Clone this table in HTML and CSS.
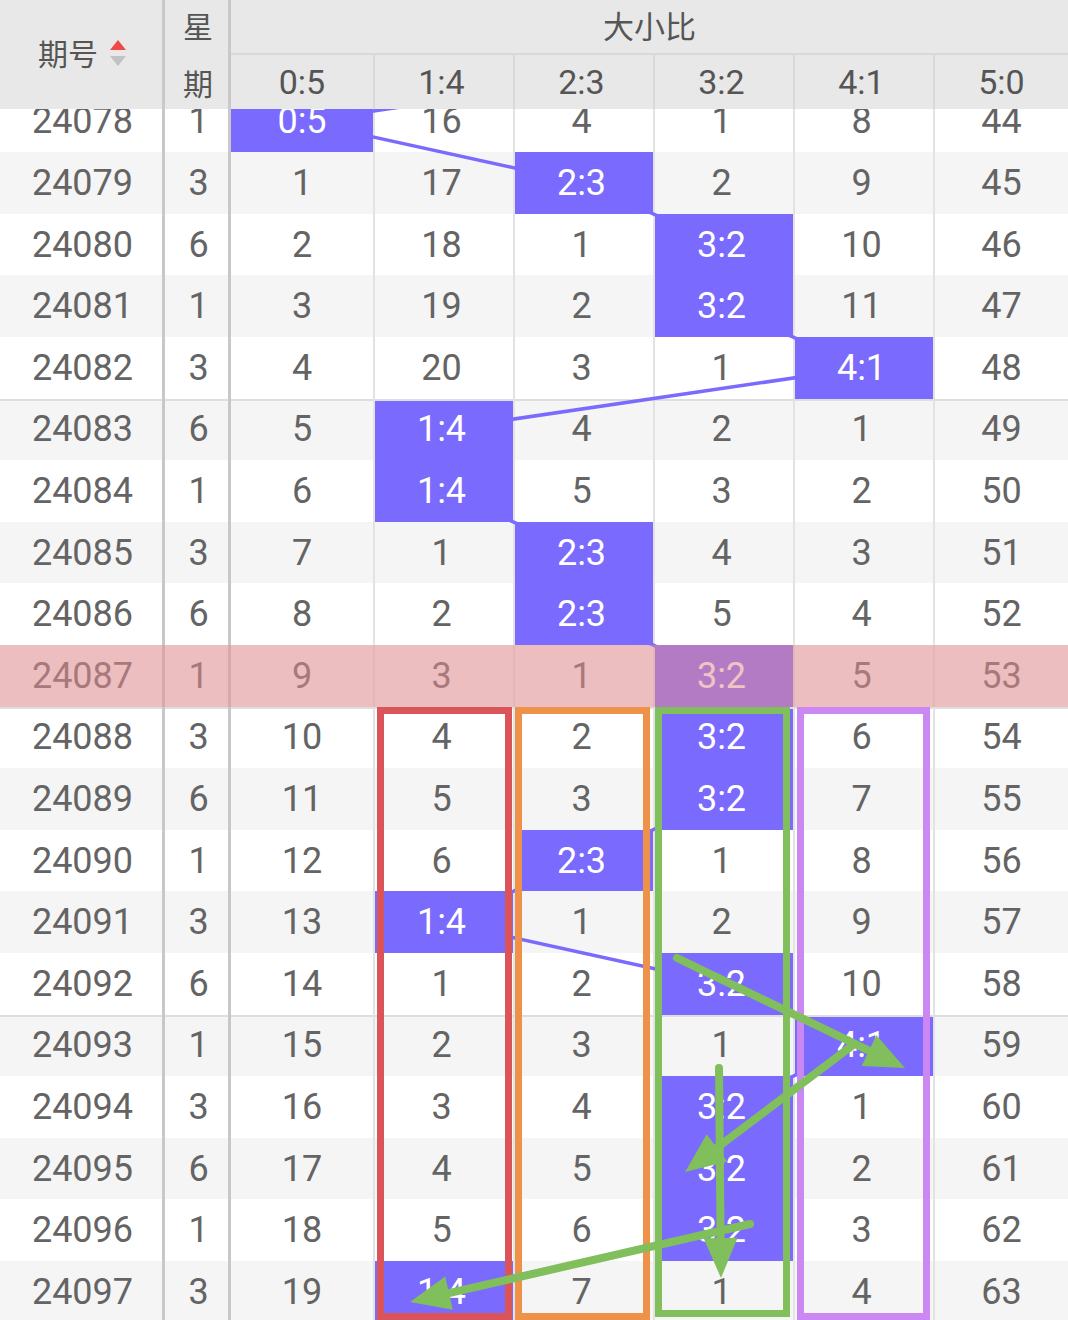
FILE: index.html
```html
<!DOCTYPE html>
<html lang="zh">
<head>
<meta charset="utf-8">
<title>大小比走势</title>
<link rel="stylesheet" href="styles.css">
</head>
<body>
<div class="board">
  <div class="head">
    <div class="h-id"><span>期号</span><span class="sort"><i class="up"></i><i class="dn"></i></span></div>
    <div class="h-sep sa"></div>
    <div class="h-wk r1">星</div>
    <div class="h-wk r2">期</div>
    <div class="h-sep sb"></div>
    <div class="h-group">大小比</div>
    <div class="h-col first">0:5</div>
    <div class="h-col">1:4</div>
    <div class="h-col">2:3</div>
    <div class="h-col">3:2</div>
    <div class="h-col">4:1</div>
    <div class="h-col">5:0</div>
  </div>

  <div class="body">
    <div class="row"><div class="c id"><span>24078</span></div><div class="sep"></div><div class="c wk"><span>1</span></div><div class="sep"></div><div class="c d hit"><span>0:5</span></div><div class="c d"><span>16</span></div><div class="c d"><span>4</span></div><div class="c d"><span>1</span></div><div class="c d"><span>8</span></div><div class="c d"><span>44</span></div></div>
    <div class="row alt"><div class="c id"><span>24079</span></div><div class="sep"></div><div class="c wk"><span>3</span></div><div class="sep"></div><div class="c d"><span>1</span></div><div class="c d"><span>17</span></div><div class="c d hit"><span>2:3</span></div><div class="c d"><span>2</span></div><div class="c d"><span>9</span></div><div class="c d"><span>45</span></div></div>
    <div class="row"><div class="c id"><span>24080</span></div><div class="sep"></div><div class="c wk"><span>6</span></div><div class="sep"></div><div class="c d"><span>2</span></div><div class="c d"><span>18</span></div><div class="c d"><span>1</span></div><div class="c d hit"><span>3:2</span></div><div class="c d"><span>10</span></div><div class="c d"><span>46</span></div></div>
    <div class="row alt"><div class="c id"><span>24081</span></div><div class="sep"></div><div class="c wk"><span>1</span></div><div class="sep"></div><div class="c d"><span>3</span></div><div class="c d"><span>19</span></div><div class="c d"><span>2</span></div><div class="c d hit"><span>3:2</span></div><div class="c d"><span>11</span></div><div class="c d"><span>47</span></div></div>
    <div class="row"><div class="c id"><span>24082</span></div><div class="sep"></div><div class="c wk"><span>3</span></div><div class="sep"></div><div class="c d"><span>4</span></div><div class="c d"><span>20</span></div><div class="c d"><span>3</span></div><div class="c d"><span>1</span></div><div class="c d hit"><span>4:1</span></div><div class="c d"><span>48</span></div></div>

    <div class="row alt grp"><div class="c id"><span>24083</span></div><div class="sep"></div><div class="c wk"><span>6</span></div><div class="sep"></div><div class="c d"><span>5</span></div><div class="c d hit"><span>1:4</span></div><div class="c d"><span>4</span></div><div class="c d"><span>2</span></div><div class="c d"><span>1</span></div><div class="c d"><span>49</span></div></div>
    <div class="row"><div class="c id"><span>24084</span></div><div class="sep"></div><div class="c wk"><span>1</span></div><div class="sep"></div><div class="c d"><span>6</span></div><div class="c d hit"><span>1:4</span></div><div class="c d"><span>5</span></div><div class="c d"><span>3</span></div><div class="c d"><span>2</span></div><div class="c d"><span>50</span></div></div>
    <div class="row alt"><div class="c id"><span>24085</span></div><div class="sep"></div><div class="c wk"><span>3</span></div><div class="sep"></div><div class="c d"><span>7</span></div><div class="c d"><span>1</span></div><div class="c d hit"><span>2:3</span></div><div class="c d"><span>4</span></div><div class="c d"><span>3</span></div><div class="c d"><span>51</span></div></div>
    <div class="row"><div class="c id"><span>24086</span></div><div class="sep"></div><div class="c wk"><span>6</span></div><div class="sep"></div><div class="c d"><span>8</span></div><div class="c d"><span>2</span></div><div class="c d hit"><span>2:3</span></div><div class="c d"><span>5</span></div><div class="c d"><span>4</span></div><div class="c d"><span>52</span></div></div>
    <div class="row alt cur"><div class="c id"><span>24087</span></div><div class="sep"></div><div class="c wk"><span>1</span></div><div class="sep"></div><div class="c d"><span>9</span></div><div class="c d"><span>3</span></div><div class="c d"><span>1</span></div><div class="c d hit"><span>3:2</span></div><div class="c d"><span>5</span></div><div class="c d"><span>53</span></div></div>

    <div class="row grp"><div class="c id"><span>24088</span></div><div class="sep"></div><div class="c wk"><span>3</span></div><div class="sep"></div><div class="c d"><span>10</span></div><div class="c d"><span>4</span></div><div class="c d"><span>2</span></div><div class="c d hit"><span>3:2</span></div><div class="c d"><span>6</span></div><div class="c d"><span>54</span></div></div>
    <div class="row alt"><div class="c id"><span>24089</span></div><div class="sep"></div><div class="c wk"><span>6</span></div><div class="sep"></div><div class="c d"><span>11</span></div><div class="c d"><span>5</span></div><div class="c d"><span>3</span></div><div class="c d hit"><span>3:2</span></div><div class="c d"><span>7</span></div><div class="c d"><span>55</span></div></div>
    <div class="row"><div class="c id"><span>24090</span></div><div class="sep"></div><div class="c wk"><span>1</span></div><div class="sep"></div><div class="c d"><span>12</span></div><div class="c d"><span>6</span></div><div class="c d hit"><span>2:3</span></div><div class="c d"><span>1</span></div><div class="c d"><span>8</span></div><div class="c d"><span>56</span></div></div>
    <div class="row alt"><div class="c id"><span>24091</span></div><div class="sep"></div><div class="c wk"><span>3</span></div><div class="sep"></div><div class="c d"><span>13</span></div><div class="c d hit"><span>1:4</span></div><div class="c d"><span>1</span></div><div class="c d"><span>2</span></div><div class="c d"><span>9</span></div><div class="c d"><span>57</span></div></div>
    <div class="row"><div class="c id"><span>24092</span></div><div class="sep"></div><div class="c wk"><span>6</span></div><div class="sep"></div><div class="c d"><span>14</span></div><div class="c d"><span>1</span></div><div class="c d"><span>2</span></div><div class="c d hit"><span>3:2</span></div><div class="c d"><span>10</span></div><div class="c d"><span>58</span></div></div>

    <div class="row alt grp"><div class="c id"><span>24093</span></div><div class="sep"></div><div class="c wk"><span>1</span></div><div class="sep"></div><div class="c d"><span>15</span></div><div class="c d"><span>2</span></div><div class="c d"><span>3</span></div><div class="c d"><span>1</span></div><div class="c d hit"><span>4:1</span></div><div class="c d"><span>59</span></div></div>
    <div class="row"><div class="c id"><span>24094</span></div><div class="sep"></div><div class="c wk"><span>3</span></div><div class="sep"></div><div class="c d"><span>16</span></div><div class="c d"><span>3</span></div><div class="c d"><span>4</span></div><div class="c d hit"><span>3:2</span></div><div class="c d"><span>1</span></div><div class="c d"><span>60</span></div></div>
    <div class="row alt"><div class="c id"><span>24095</span></div><div class="sep"></div><div class="c wk"><span>6</span></div><div class="sep"></div><div class="c d"><span>17</span></div><div class="c d"><span>4</span></div><div class="c d"><span>5</span></div><div class="c d hit"><span>3:2</span></div><div class="c d"><span>2</span></div><div class="c d"><span>61</span></div></div>
    <div class="row"><div class="c id"><span>24096</span></div><div class="sep"></div><div class="c wk"><span>1</span></div><div class="sep"></div><div class="c d"><span>18</span></div><div class="c d"><span>5</span></div><div class="c d"><span>6</span></div><div class="c d hit"><span>3:2</span></div><div class="c d"><span>3</span></div><div class="c d"><span>62</span></div></div>
    <div class="row alt"><div class="c id"><span>24097</span></div><div class="sep"></div><div class="c wk"><span>3</span></div><div class="sep"></div><div class="c d"><span>19</span></div><div class="c d hit"><span>1:4</span></div><div class="c d"><span>7</span></div><div class="c d"><span>1</span></div><div class="c d"><span>4</span></div><div class="c d"><span>63</span></div></div>
  </div>

  <svg class="trend" width="1068" height="1320" viewBox="0 0 1068 1320" aria-hidden="true">
    <polyline fill="none" stroke="#7a6afd" stroke-width="3.5" stroke-linejoin="round"
      points="723,59.8 302,121.4 583,183 723,244.6 723,306.2 863,367.8 443,429.4 443,491 583,552.6 583,614.2 723,675.8 723,737.4 723,799 583,860.6 443,922.2 723,983.8 863,1045.4 723,1107 723,1168.6 723,1230.2 443,1291.8"/>
  </svg>

  <svg class="marks" width="1068" height="1320" viewBox="0 0 1068 1320" aria-hidden="true">
    <g fill="none" stroke-width="7">
      <rect x="380.5" y="710.5" width="128" height="606" stroke="#d9555a"/>
      <rect x="518.5" y="710.5" width="128" height="606" stroke="#ef9249"/>
      <rect x="658.5" y="710.5" width="128" height="603" stroke="#80bf5b"/>
      <rect x="800.5" y="710.5" width="126" height="606" stroke="#cb88f3"/>
    </g>
    <g stroke="#80bf5b" stroke-width="8" stroke-linecap="round" fill="#80bf5b">
      <line x1="677" y1="958" x2="869" y2="1050.6"/>
      <polygon stroke="none" points="905,1068 861.6,1065.9 876.4,1035.3"/>
      <line x1="853" y1="1045" x2="716.9" y2="1147.9"/>
      <polygon stroke="none" points="685,1172 706.7,1134.3 727.2,1161.5"/>
      <line x1="719" y1="1068" x2="720.6" y2="1238"/>
      <polygon stroke="none" points="721,1278 703.6,1238.2 737.6,1237.8"/>
      <line x1="750" y1="1224" x2="449" y2="1293.1"/>
      <polygon stroke="none" points="410,1302 445.2,1276.5 452.8,1309.7"/>
    </g>
  </svg>
</div>
</body>
</html>
```

FILE: styles.css
```css
:root {
  --cols: 162px 3px 63px 3px 142px 140px 140px 140px 140px 1fr;
}

html, body {
  margin: 0;
  padding: 0;
  background: #ffffff;
}

body {
  font-family: Roboto, "Noto Sans", "Noto Sans CJK SC", sans-serif;
}

.board {
  position: relative;
  width: 1068px;
  height: 1320px;
  overflow: hidden;
}

/* ---------- header ---------- */
.head {
  position: relative;
  z-index: 5;
  display: grid;
  grid-template-columns: var(--cols);
  grid-template-rows: 55px 54px;
  background: #e8e8e8;
  color: #555555;
  font-family: "Noto Sans CJK SC", Roboto, sans-serif;
}

.h-id {
  grid-column: 1;
  grid-row: 1 / 3;
  display: flex;
  align-items: center;
  justify-content: center;
  gap: 12px;
  font-size: 30px;
  padding-left: 2px;
  padding-bottom: 6px;
}

.sort {
  display: flex;
  flex-direction: column;
  gap: 6px;
  margin-top: 2px;
}

.sort i {
  display: block;
  width: 0;
  height: 0;
  border-left: 8px solid transparent;
  border-right: 8px solid transparent;
}

.sort .up { border-bottom: 10px solid #f04a48; }
.sort .dn { border-top: 10px solid #c2c2c2; }

.h-sep {
  grid-row: 1 / 3;
  background: #c9c9c9;
}
.h-sep.sa { grid-column: 2; }
.h-sep.sb { grid-column: 4; }

.h-wk {
  grid-column: 3;
  display: flex;
  align-items: center;
  justify-content: center;
  font-size: 30px;
  padding-left: 3px;
}
.h-wk.r1 { grid-row: 1; padding-bottom: 6px; }
.h-wk.r2 { grid-row: 2; }

.h-group {
  grid-column: 5 / 11;
  grid-row: 1;
  display: flex;
  align-items: center;
  justify-content: center;
  font-size: 31px;
  border-bottom: 2px solid #d9d9d9;
  padding-bottom: 5px;
}

.h-col {
  grid-row: 2;
  display: flex;
  align-items: center;
  justify-content: center;
  font-family: Roboto, "Noto Sans", sans-serif;
  font-size: 34px;
  border-left: 2px solid #d9d9d9;
  padding-right: 5px;
}
.h-col.first { border-left: none; padding-right: 0; }
.h-col:last-child { padding-right: 0; }

/* ---------- body ---------- */
.body {
  margin-top: -18.4px;
}

.row {
  position: relative;
  display: grid;
  grid-template-columns: var(--cols);
  height: 61.6px;
  background: #ffffff;
  color: #646464;
  font-size: 36px;
}

.row.alt { background: #f5f5f5; }

.c {
  display: flex;
  align-items: center;
  justify-content: center;
  box-sizing: border-box;
  min-width: 0;
}

.c span {
  position: relative;
  z-index: 2;
}

.c.id { padding-left: 3px; }
.c.wk { padding-left: 4px; }

.sep { background: #c8c8c8; }

.d + .d {
  border-left: 2px solid #e3e3e3;
  padding-right: 5px;
}
.d:last-child { padding-right: 0; }

.hit {
  background: #7a6afd;
  background-clip: padding-box;
  color: #ffffff;
}

.grp .c { border-top: 2px solid #dedede; }
.grp .c span { top: -1px; }

.cur::after {
  content: "";
  position: absolute;
  inset: 0;
  background: rgba(230, 140, 144, 0.52);
  z-index: 3;
}

/* ---------- overlays ---------- */
.trend,
.marks {
  position: absolute;
  left: 0;
  top: 0;
  pointer-events: none;
}

.trend { z-index: 1; }
.marks { z-index: 4; }
```
